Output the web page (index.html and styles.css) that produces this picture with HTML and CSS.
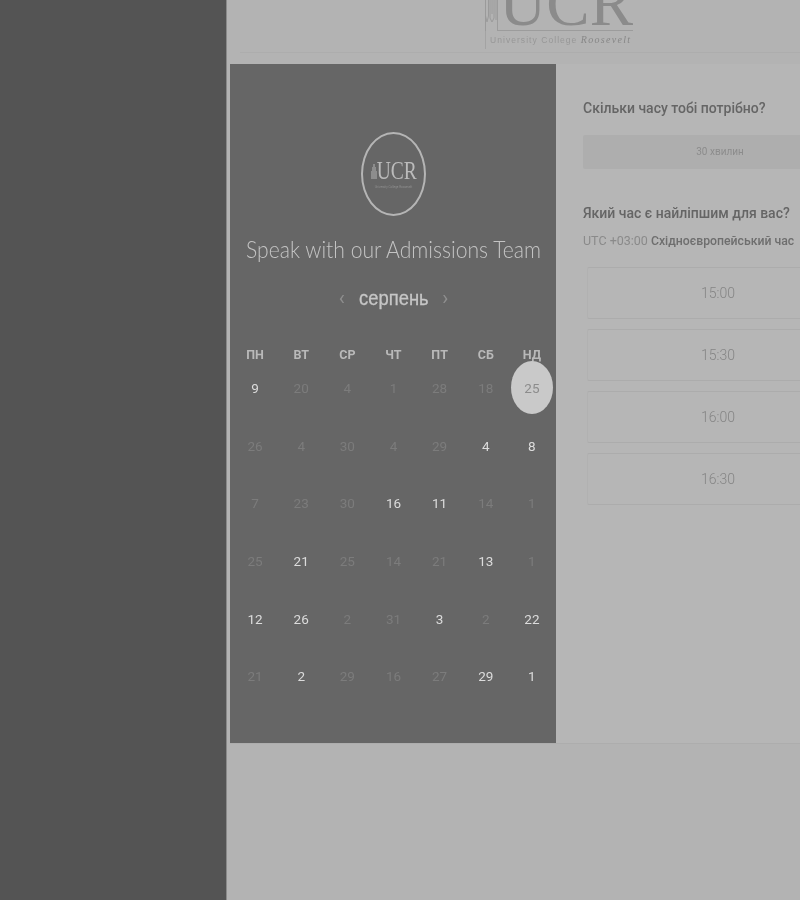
FILE: index.html
```html
<!DOCTYPE html>
<html lang="uk">
<head>
  <meta charset="UTF-8" />
  <meta name="viewport" content="width=device-width, initial-scale=1.0">
  <title>Speak with our Admissions Team</title>
  <link rel="stylesheet" href="styles.css">
</head>
<body>
  <div class="sidebar"></div>

  <div class="main">
    <div class="header">
      <div class="brand">
        <div class="brand-top">
          <svg class="brand-tower" width="12" height="31" viewBox="0 0 12 31" fill="none" stroke="#9a9a9a" stroke-width="1">
            <path d="M0.500 0V31" />
            <path d="M0.500 16L2 22L3.500 16V0" />
            <path d="M5 0V18L7 22L9 18V0" />
            <path d="M7 0V14" />
            <path d="M11 0V20" />
          </svg>
          <div class="brand-mark">UCR</div>
        </div>
        <div class="brand-name">University College <em>Roosevelt</em></div>
      </div>
    </div>

    <div class="content">
      <div class="calendar">
        <div class="badge">
          <div class="badge-row">
            <svg width="6" height="15" viewBox="0 0 6 15" fill="#8d8d8d">
              <path d="M0 15V7H1V3H2V0H4V3H5V7H6V15Z" />
            </svg>
            <span class="badge-mark">UCR</span>
          </div>
          <span class="badge-name">University College Roosevelt</span>
        </div>
        <h1>Speak with our Admissions Team</h1>
        <div class="month">
          <span class="arrow">‹</span>
          <span class="month-name">серпень</span>
          <span class="arrow">›</span>
        </div>

        <div class="weekdays">
          <span>ПН</span><span>ВТ</span><span>СР</span><span>ЧТ</span><span>ПТ</span><span>СБ</span><span>НД</span>
        </div>
        <div class="days">
          <span class="on">9</span><span>20</span><span>4</span><span>1</span><span>28</span><span>18</span><span class="selected">25</span>
          <span>26</span><span>4</span><span>30</span><span>4</span><span>29</span><span class="on">4</span><span class="on">8</span>
          <span>7</span><span>23</span><span>30</span><span class="on">16</span><span class="on">11</span><span>14</span><span>1</span>
          <span>25</span><span class="on">21</span><span>25</span><span>14</span><span>21</span><span class="on">13</span><span>1</span>
          <span class="on">12</span><span class="on">26</span><span>2</span><span>31</span><span class="on">3</span><span>2</span><span class="on">22</span>
          <span>21</span><span class="on">2</span><span>29</span><span>16</span><span>27</span><span class="on">29</span><span class="on">1</span>
        </div>
      </div>

      <div class="booking">
        <h2>Скільки часу тобі потрібно?</h2>
        <div class="duration">30 хвилин</div>
        <h2 class="time-title">Який час є найліпшим для вас?</h2>
        <p class="zone">UTC +03:00 <strong>Східноєвропейський час</strong></p>
        <div class="slots">
          <div class="slot">15:00</div>
          <div class="slot">15:30</div>
          <div class="slot">16:00</div>
          <div class="slot">16:30</div>
        </div>
      </div>
    </div>
  </div>
</body>
</html>
```

FILE: styles.css
```css
body {
  margin: 0;
  height: 900px;
  overflow: hidden;
  display: flex;
  background: #b3b3b3;
  font-family: 'Roboto', 'Liberation Sans', sans-serif;
  filter: blur(0.4px);
}

.sidebar {
  width: 226px;
  flex-shrink: 0;
  background: #545454;
  border-right: 1px solid #8a8a8a;
}

.main {
  flex: 1;
  min-width: 0;
  overflow: hidden;
}

.header {
  height: 52px;
  margin-left: 13px;
  padding-left: 245px;
  border-bottom: 1px solid #adadad;
  overflow: hidden;
}

.brand {
  width: 148px;
}

.brand-top {
  display: flex;
  height: 31px;
}

.brand-tower {
  flex-shrink: 0;
}

.brand-mark {
  flex: 1;
  min-width: 0;
  overflow: hidden;
  display: flex;
  align-items: flex-end;
  justify-content: flex-end;
  box-sizing: border-box;
  padding-bottom: 14px;
  line-height: 26px;
  font-family: 'Liberation Serif', serif;
  font-size: 65px;
  color: #8b8b8b;
  border-left: 1px solid #9c9c9c;
  border-bottom: 1px solid #9c9c9c;
}

.brand-name {
  padding: 3px 0 3px 4px;
  border-left: 1px solid #a3a3a3;
  font-family: 'Liberation Sans', sans-serif;
  font-size: 8.500px;
  line-height: 11px;
  letter-spacing: 1.050px;
  white-space: nowrap;
  color: #979797;
}

.brand-name em {
  font-family: 'Liberation Serif', serif;
  font-size: 10px;
  letter-spacing: 1.300px;
  color: #878787;
}

.content {
  display: flex;
  margin: 11px 0 0 3px;
  border-bottom: 1px solid #adadad;
}

.calendar {
  width: 326px;
  height: 679px;
  flex-shrink: 0;
  padding: 68px 1px 0 2px;
  box-sizing: border-box;
  background: #666;
  color: #bbb;
}

.badge {
  width: 65px;
  height: 84px;
  margin: 0 auto;
  padding-bottom: 2px;
  box-sizing: border-box;
  border: 2.500px solid #b5b5b5;
  border-radius: 50%;
  display: flex;
  flex-direction: column;
  align-items: center;
  justify-content: center;
}

.badge-row {
  display: flex;
  align-items: center;
  gap: 1px;
}

.badge-mark {
  margin: 0 -7px;
  font-family: 'Liberation Serif', serif;
  font-size: 25px;
  line-height: 28px;
  color: #bbb;
  transform: scaleX(0.78);
}

.badge-name {
  font-size: 3px;
  line-height: 4px;
  white-space: nowrap;
  color: #8f8f8f;
}

h1 {
  margin: 19px -20px 0;
  font-family: 'Lato', sans-serif;
  font-weight: 300;
  font-size: 24px;
  line-height: 28px;
  text-align: center;
  white-space: nowrap;
  color: #c4c4c4;
  transform: scaleX(0.88);
}

.month {
  display: flex;
  align-items: center;
  justify-content: center;
  gap: 14px;
  margin-top: 21px;
  height: 28px;
}

.month-name {
  margin: 0 -3px;
  font-family: 'Liberation Sans', sans-serif;
  font-size: 20px;
  color: #c6c6c6;
  -webkit-text-stroke: 0.3px #c6c6c6;
  transform: scaleX(0.92);
}

.arrow {
  font-size: 20px;
  color: #8f8f8f;
}

.weekdays {
  display: grid;
  grid-template-columns: repeat(7, 1fr);
  margin-top: 36px;
  text-align: center;
  font-size: 12.500px;
  font-weight: 700;
  line-height: 14px;
  color: #b9b9b9;
}

.days {
  display: grid;
  grid-template-columns: repeat(7, 1fr);
  grid-auto-rows: 57.700px;
  text-align: center;
  font-size: 13.500px;
  line-height: 16px;
  color: #7c7c7c;
}

.days span {
  position: relative;
  padding-top: 18px;
  box-sizing: border-box;
}

.days .on {
  color: #dcdcdc;
}

.days .selected {
  z-index: 0;
  color: #8c8c8c;
}

.days .selected::before {
  content: "";
  position: absolute;
  z-index: -1;
  top: -1px;
  left: 2px;
  width: 42px;
  height: 53px;
  border-radius: 50%;
  background: #c9c9c9;
}

.booking {
  flex-shrink: 0;
  width: 274px;
  padding: 35px 0 0 27px;
  background: #b6b6b6;
}

h2 {
  margin: 0;
  font-size: 14px;
  font-weight: 500;
  line-height: 18px;
  white-space: nowrap;
  color: #656565;
}

.duration {
  height: 34px;
  margin-top: 18px;
  background: #aeaeae;
  border-radius: 2px;
  text-align: center;
  line-height: 34px;
  font-size: 10px;
  color: #8c8c8c;
}

.time-title {
  margin-top: 35px;
}

.zone {
  margin: 11px 0 18px;
  font-size: 12.500px;
  line-height: 16px;
  white-space: nowrap;
  color: #8a8a8a;
}

.zone strong {
  font-size: 12.250px;
  font-weight: 500;
  color: #6e6e6e;
}

.slots {
  display: flex;
  flex-direction: column;
  gap: 10px;
  width: 262px;
  margin-left: 4px;
}

.slot {
  height: 52px;
  box-sizing: border-box;
  border: 1px solid #b1b1b1;
  border-top-color: #acacac;
  border-bottom-color: #acacac;
  border-radius: 2px;
  text-align: center;
  line-height: 50px;
  font-size: 14px;
  font-weight: 300;
  color: #858585;
}
```
